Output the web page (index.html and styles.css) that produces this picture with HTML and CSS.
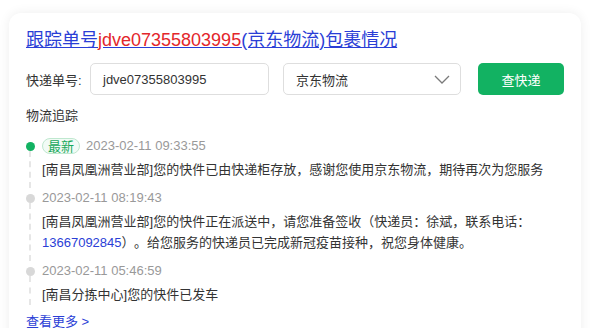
FILE: index.html
```html
<!DOCTYPE html>
<html lang="zh-CN">
<head>
    <meta charset="UTF-8">
    <title>快递查询</title>
    <link rel="stylesheet" href="styles.css">
</head>
<body>
    <div class="card">
        <h1 class="title"><a href="#">跟踪单号<span class="num">jdve07355803995</span>(京东物流)包裹情况</a></h1>

        <div class="search">
            <label class="label">快递单号:</label>
            <div class="input">jdve07355803995</div>
            <div class="select">
                <span>京东物流</span>
                <svg width="16" height="9" viewBox="0 0 16 9"><path d="M1 1l7 7 7-7" fill="none" stroke="#7a7a7a" stroke-width="1.3"/></svg>
            </div>
            <button class="btn">查快递</button>
        </div>

        <div class="section">物流追踪</div>

        <ul class="track">
            <li class="item first">
                <div class="time"><span class="tag">最新</span>2023-02-11 09:33:55</div>
                <div class="text">[南昌凤凰洲营业部]您的快件已由快递柜存放，感谢您使用京东物流，期待再次为您服务</div>
            </li>
            <li class="item">
                <div class="time">2023-02-11 08:19:43</div>
                <div class="text">[南昌凤凰洲营业部]您的快件正在派送中，请您准备签收（快递员：徐斌，联系电话：<a href="#" class="phone">13667092845</a>）<span class="gap">。</span>给您服务的快递员已完成新冠疫苗接种，祝您身体健康。</div>
            </li>
            <li class="item">
                <div class="time">2023-02-11 05:46:59</div>
                <div class="text">[南昌分拣中心]您的快件已发车</div>
            </li>
        </ul>

        <a href="#" class="more">查看更多 &gt;</a>
    </div>
</body>
</html>
```

FILE: styles.css
```css
body {
    margin: 0;
    padding: 13px 24px 0 9px;
    background: #ffffff;
    font-family: "Liberation Sans", "Noto Sans CJK SC", sans-serif;
    color: #333;
    font-size: 13px;
    height: 328px;
    box-sizing: border-box;
    overflow: hidden;
}

.card {
    background: #fff;
    border-radius: 12px;
    box-shadow: 0 0 12px rgba(0, 0, 0, 0.07);
    padding: 14px 17px 20px 17px;
}

.title {
    margin: 0;
    font-size: 18px;
    font-weight: normal;
    line-height: 26px;
}

.title a {
    color: #2a3ed6;
    text-decoration: underline;
}

.title .num {
    color: #e3262b;
}

.search {
    display: flex;
    align-items: center;
    margin-top: 10px;
    height: 32px;
}

.label {
    width: 64px;
    color: #333;
}

.input, .select {
    box-sizing: border-box;
    height: 32px;
    border: 1px solid #dedede;
    border-radius: 5px;
    display: flex;
    align-items: center;
    padding: 0 12px;
    color: #333;
}

.input {
    width: 179px;
}

.select {
    width: 178px;
    margin-left: 14px;
    justify-content: space-between;
    padding-right: 10px;
}

.btn {
    margin-left: 17px;
    width: 86px;
    height: 32px;
    border: none;
    border-radius: 5px;
    background: #12b262;
    color: #fff;
    font-family: inherit;
    font-size: 13px;
}

.section {
    margin-top: 11px;
    line-height: 20px;
    color: #333;
}

.track {
    list-style: none;
    margin: 10px 0 0 0;
    padding: 0;
}

.item {
    position: relative;
    padding-left: 16px;
    margin-top: 8px;
}

.item.first {
    margin-top: 0;
}

/* dot */
.item::before {
    content: "";
    position: absolute;
    left: 0;
    top: 6px;
    width: 9px;
    height: 9px;
    border-radius: 50%;
    background: #d8d8d8;
    z-index: 1;
}

.item.first::before {
    background: #12b262;
}

/* dashed line */
.item::after {
    content: "";
    position: absolute;
    left: 3px;
    top: 15px;
    bottom: -8px;
    border-left: 2px dashed #e6e6e6;
}

.item:last-child::after {
    bottom: 0;
}

.time {
    line-height: 20px;
    color: #999;
    display: flex;
    align-items: center;
}

.tag {
    display: inline-block;
    height: 16px;
    line-height: 15px;
    padding: 0 5px;
    border: 1px solid #bfe8cf;
    border-radius: 9px;
    background: #f2fbf6;
    color: #18a95c;
    margin-right: 6px;
    box-sizing: border-box;
}

.text {
    margin-top: 3px;
    line-height: 21px;
    color: #333;
}

.gap {
    margin-left: 6px;
}

.phone {
    color: #2a3ed6;
    text-decoration: none;
}

.more {
    display: block;
    margin-top: 7px;
    line-height: 20px;
    color: #2a3ed6;
    text-decoration: none;
}
```
